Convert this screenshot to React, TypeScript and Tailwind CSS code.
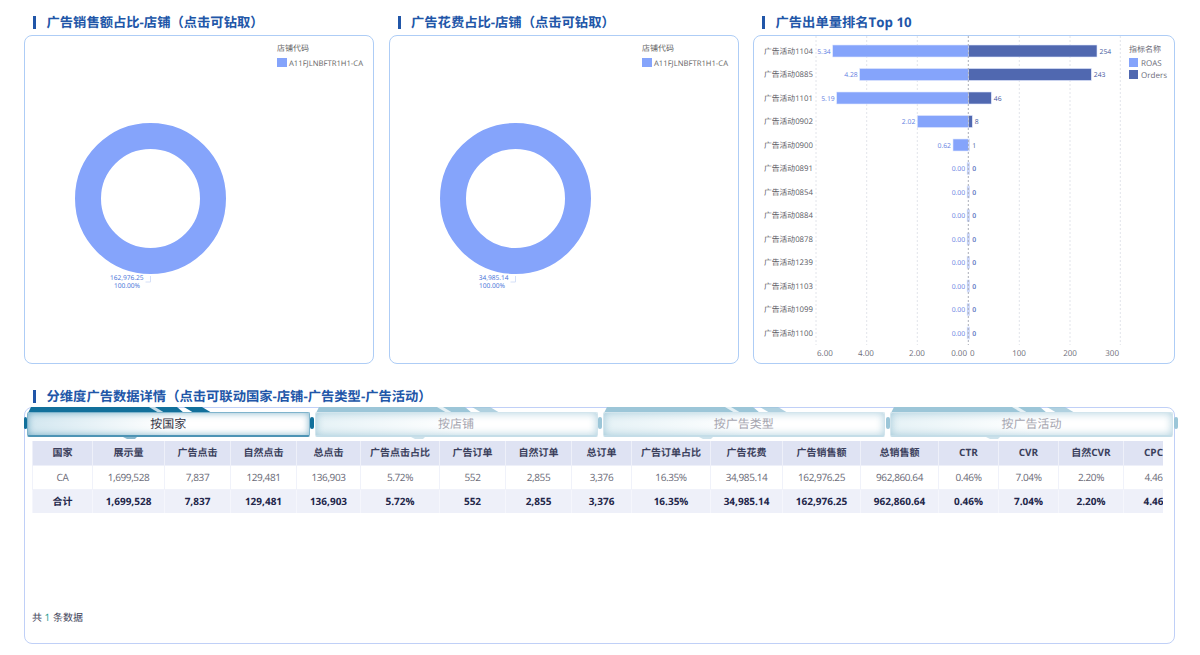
const columns = ['国家', '展示量', '广告点击', '自然点击', '总点击', '广告点击占比', '广告订单', '自然订单', '总订单', '广告订单占比', '广告花费', '广告销售额', '总销售额', 'CTR', 'CVR', '自然CVR', 'CPC'];
const widths = [60, 72, 66, 66, 64, 79, 66, 66, 60, 79, 72, 78, 78, 60, 60, 65, 60];
const row = ['CA', '1,699,528', '7,837', '129,481', '136,903', '5.72%', '552', '2,855', '3,376', '16.35%', '34,985.14', '162,976.25', '962,860.64', '0.46%', '7.04%', '2.20%', '4.46'];
const total = ['合计', ...row.slice(1)];

// name, roas label, left bar width, orders label, right bar width
const bars: [string, string, number, string, number][] = [
  ['广告活动1104', '5.34', 135.6, '254', 128.7],
  ['广告活动0885', '4.28', 108.6, '243', 123],
  ['广告活动1101', '5.19', 131.6, '46', 23],
  ['广告活动0902', '2.02', 51, '8', 4],
  ['广告活动0900', '0.62', 15.3, '1', 1.4],
  ['广告活动0891', '0.00', 1.2, '0', 1.4],
  ['广告活动0854', '0.00', 1.2, '0', 1.4],
  ['广告活动0884', '0.00', 1.2, '0', 1.4],
  ['广告活动0878', '0.00', 1.2, '0', 1.4],
  ['广告活动1239', '0.00', 1.2, '0', 1.4],
  ['广告活动1103', '0.00', 1.2, '0', 1.4],
  ['广告活动1099', '0.00', 1.2, '0', 1.4],
  ['广告活动1100', '0.00', 1.2, '0', 1.4],
];

function Title({ text }: { text: string }) {
  return (
    <div className="flex items-center gap-[10.5px] pl-[9px] h-4">
      <div className="w-[3px] h-[13px] bg-[#2156a8]" />
      <span className="text-[13.3px] leading-4 font-bold text-[#2156a8] whitespace-nowrap">{text}</span>
    </div>
  );
}

function Donut({ value, offset }: { value: string; offset: number }) {
  const cx = 150.5 + offset;
  return (
    <svg width="350" height="329" className="block">
      <g transform={`translate(${-25 - offset} -36)`}>
        <text x={277 + offset} y={51} fontSize="8" fill="#666">店铺代码</text>
        <rect x={277 + offset} y={58} width="10" height="9" fill="#85a4fb" />
        <text x={289 + offset} y={65.5} fontSize="7.7" fill="#666">A11FJLNBFTR1H1-CA</text>
        <circle cx={cx} cy={198.5} r={62.5} fill="none" stroke="#85a4fb" strokeWidth="26" />
        <path d={`M${cx - 5} 282H${cx}V276`} fill="none" stroke="#d5e0f8" strokeWidth="1" />
        <text x={cx - 7} y={279.5} fontSize="6.6" fill="#4470d8" textAnchor="end">{value}</text>
        <text x={cx - 10.5} y={288} fontSize="6.6" fill="#4470d8" textAnchor="end">100.00%</text>
      </g>
    </svg>
  );
}

function BarChart() {
  const axis = 968.3;
  return (
    <svg width="422" height="329" className="block">
      <g transform="translate(-754 -36)">
        {[816, 866.7, 917.3, 1019.3, 1070, 1120.3].map((x) => (
          <line key={x} x1={x} x2={x} y1={36} y2={345} stroke="#e2e4ea" strokeWidth="1" strokeDasharray="2 2" />
        ))}
        {bars.map(([name, roas, left, orders, right], i) => {
          const y = 51 + i * 23.5;
          const zero = orders === '0';
          return (
            <g key={name}>
              <text x={813} y={y + 2.8} fontSize="7.8" fill="#5c5c66" textAnchor="end">{name}</text>
              <rect x={axis - left} y={y - 6} width={left} height={12} fill={zero ? '#aabdf2' : '#85a4fb'} stroke="#dfe7fd" strokeWidth="0.6" />
              <rect x={axis} y={y - 6} width={right} height={12} fill={i === 4 || zero ? '#aabdf2' : '#5068b0'} stroke="#dfe7fd" strokeWidth="0.6" />
              <text x={axis - left - 2} y={y + 2.5} fontSize="6.8" fill="#5f80e2" textAnchor="end">{roas}</text>
              <text x={axis + right + 2.5} y={y + 2.5} fontSize="6.8" fill={zero ? '#5a70c0' : '#44589e'} fontWeight={zero ? 600 : 400}>{orders}</text>
            </g>
          );
        })}
        <line x1={axis} x2={axis} y1={36} y2={345} stroke="#a9adb8" strokeWidth="1" strokeDasharray="2 2" />
        <g fontSize="8" fill="#6c6c78">
          <text x={817} y={356}>6.00</text>
          <text x={866} y={356} textAnchor="middle">4.00</text>
          <text x={917} y={356} textAnchor="middle">2.00</text>
          <text x={967} y={356} textAnchor="end">0.00</text>
          <text x={970} y={356}>0</text>
          <text x={1019} y={356} textAnchor="middle">100</text>
          <text x={1070} y={356} textAnchor="middle">200</text>
          <text x={1119} y={356} textAnchor="end">300</text>
          <text x={1129} y={52}>指标名称</text>
          <rect x={1129} y={58} width="9" height="9" fill="#85a4fb" />
          <text x={1141} y={65.5}>ROAS</text>
          <rect x={1129} y={70} width="9" height="9" fill="#5068b0" />
          <text x={1141} y={77.5}>Orders</text>
        </g>
      </g>
    </svg>
  );
}

function Tab({ label, active, first }: { label: string; active?: boolean; first?: boolean }) {
  const band = active ? '#12709b' : '#9cc6d8';
  return (
    <div className="relative flex-1 h-[32px]">
      <svg width="230" height="6" className="absolute top-0 left-0">
        <path d="M1 6 L4 0 H150 L157 6 Z" fill={band} />
        <path d="M122 0 H128 L138 6 H132 Z" fill="#ffffff" opacity="0.75" />
        <path d="M157 0 H175 L185 6 H167 Z" fill={band} opacity={active ? 1 : 0.8} />
      </svg>
      <div
        className={
          active
            ? 'absolute top-[5px] left-0 right-0 h-[25px] flex items-center justify-center rounded-[2px] border border-[#7fb4cc] border-b-[2px] border-b-[#4d94b5] bg-gradient-to-r from-[#d3e7f0] via-white to-white shadow-[inset_0_0_7px_rgba(30,120,160,0.55)] text-[12px] text-[#333344]'
            : 'absolute top-[5px] left-0 right-0 h-[25px] flex items-center justify-center rounded-[2px] border border-[#d3e5ed] border-b-[2px] border-b-[#c4dde8] bg-gradient-to-r from-[#e6f2f6] via-white to-white shadow-[inset_0_0_8px_rgba(110,170,195,0.55)] text-[12px] text-[#a6a6b0]'
        }
      >
        {label}
      </div>
      <svg width="14" height="2" className="absolute bottom-0 left-[96px]">
        <path d="M0 0 H14 L12 2 H4 Z" fill={band} opacity="0.5" />
      </svg>
      {first && <div className="absolute top-[10px] left-[-3px] w-[3px] h-[12px] rounded-full" style={{ backgroundColor: band }} />}
      <div className="absolute top-[10px] right-[-4.5px] w-1 h-[12px] rounded-full" style={{ backgroundColor: band }} />
    </div>
  );
}

export default function App() {
  return (
    <div className="w-[1200px] h-[655px] overflow-hidden bg-white font-['Open_Sans','Noto_Sans_CJK_SC',sans-serif] [text-rendering:geometricPrecision]">
      <div className="flex gap-[14.5px] pl-6 pt-[14px]">
        <section className="w-[350px]">
          <Title text="广告销售额占比-店铺（点击可钻取）" />
          <div className="mt-[5px] h-[329px] rounded-lg border border-[#aecdf6] overflow-hidden">
            <Donut value="162,976.25" offset={0} />
          </div>
        </section>
        <section className="w-[350px]">
          <Title text="广告花费占比-店铺（点击可钻取）" />
          <div className="mt-[5px] h-[329px] rounded-lg border border-[#aecdf6] overflow-hidden">
            <Donut value="34,985.14" offset={365} />
          </div>
        </section>
        <section className="w-[422px]">
          <Title text="广告出单量排名Top 10" />
          <div className="mt-[5px] h-[329px] rounded-lg border border-[#aecdf6] overflow-hidden">
            <BarChart />
          </div>
        </section>
      </div>

      <section className="w-[1151px] ml-6 mt-6">
        <Title text="分维度广告数据详情（点击可联动国家-店铺-广告类型-广告活动）" />
        <div className="mt-[3px] h-[237px] rounded-lg border border-[#c0d0f7] flex flex-col">
          <div className="flex gap-[5px] pl-[2px] pr-[1px] -mt-px">
            <Tab label="按国家" active first />
            <Tab label="按店铺" />
            <Tab label="按广告类型" />
            <Tab label="按广告活动" />
          </div>
          <div className="mt-[2px] ml-[7px] w-[1131px] overflow-hidden">
            <table className="table-fixed w-[1151px] border-collapse text-[10px] text-center">
              <colgroup>
                {widths.map((w, i) => (
                  <col key={i} style={{ width: w }} />
                ))}
              </colgroup>
              <thead>
                <tr className="h-[24px] bg-[#dfe3f3] text-[#3b3f5c]">
                  {columns.map((c) => (
                    <th key={c} className="font-bold border border-[#eef0f9] border-t-0 whitespace-nowrap">{c}</th>
                  ))}
                </tr>
              </thead>
              <tbody>
                <tr className="h-[24px] bg-white text-[#6b6b78] tracking-[-0.4px]">
                  {row.map((c, i) => (
                    <td key={i} className="border border-[#f0f2fa]">{c}</td>
                  ))}
                </tr>
                <tr className="h-[24px] bg-[#eef0f9] text-[#22264a] font-bold">
                  {total.map((c, i) => (
                    <td key={i} className="border border-[#f5f6fc] border-b-0">{c}</td>
                  ))}
                </tr>
              </tbody>
            </table>
          </div>
          <div className="mt-auto mb-[20px] ml-[7px] text-[10px] leading-3 text-[#3e4258]">
            共 <span className="text-[#2a9d8f]">1</span> 条数据
          </div>
        </div>
      </section>
    </div>
  );
}
